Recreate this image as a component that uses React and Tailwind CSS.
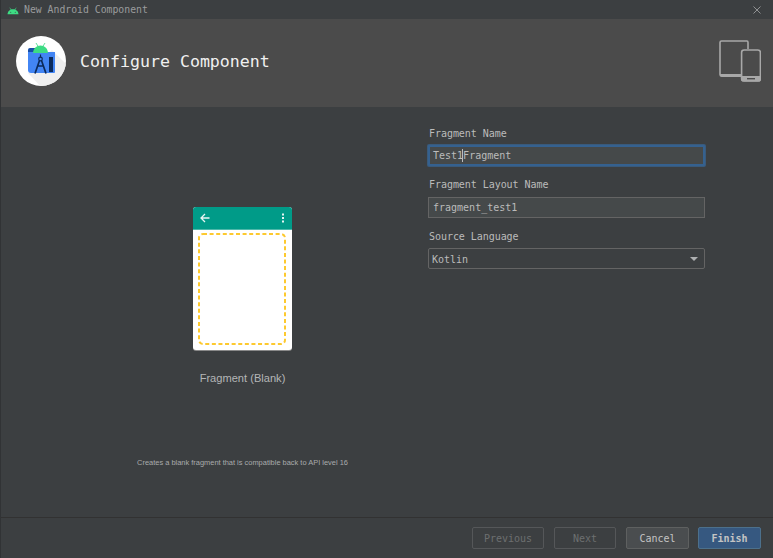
import React from "react";

const mono = "font-['DejaVu_Sans_Mono',monospace]";

function AndroidHead({ className }) {
  return (
    <svg viewBox="0 0 24 14" className={className}>
      <path d="M1 13.500C1.400 7.500 5.800 3.500 12 3.500s10.600 4 11 10z" fill="#3ddc84" />
      <path d="M6 1l2.500 4M18 1l-2.500 4" stroke="#3ddc84" strokeWidth="1.200" strokeLinecap="round" />
      <circle cx="7.500" cy="9.500" r="1" fill="#3c3f41" />
      <circle cx="16.500" cy="9.500" r="1" fill="#3c3f41" />
    </svg>
  );
}

function Logo() {
  return (
    <div className="w-[50px] h-[50px] rounded-full bg-white overflow-hidden shrink-0">
      <svg viewBox="0 0 50 50" className="w-[50px] h-[50px]">
        <path d="M36 14L52 30V52H26L12 37z" fill="#efefef" />
        <path d="M12 14q0-2 2-2h6v5h-8z" fill="#174ea6" />
        <path d="M12 16h24l3 0v20q0 1-1 1H15q-3 0-3-3z" fill="#4285f4" />
        <path d="M17 17C17.400 12.300 20.500 9.500 24.500 9.500s7.100 2.800 7.500 7.500z" fill="#3ddc84" />
        <path d="M20 7l2 3.200M29 7l-2 3.200" stroke="#3ddc84" strokeWidth="0.800" />
        <path d="M33 21h4v15h-4z" fill="#0b2a5b" />
        <circle cx="24.500" cy="23" r="1.800" fill="none" stroke="#0b2a5b" strokeWidth="1.200" />
        <path d="M23.500 24.500L19 37.500M25.500 24.500L30 37.500M21 30h7" stroke="#0b2a5b" strokeWidth="1.700" fill="none" />
        <path d="M24.500 18.500v3" stroke="#0b2a5b" strokeWidth="1.200" />
      </svg>
    </div>
  );
}

function Devices() {
  return (
    <svg viewBox="0 0 42 42" className="w-[42px] h-[42px]" fill="none">
      <path d="M22 36H2.500Q1 36 1 34.500V2.500Q1 1 2.500 1H28Q29 1 29 2.500V9" stroke="#a8a8a8" strokeWidth="1.600" />
      <path d="M1 34h21v3H3q-2 0-2-2z" fill="#a8a8a8" />
      <rect x="22.600" y="10" width="18.800" height="31" rx="2.500" stroke="#a8a8a8" strokeWidth="1.600" />
      <path d="M22 36h20v3q0 2.600-2.500 2.600h-15q-2.500 0-2.500-2.600z" fill="#a8a8a8" />
      <rect x="28" y="38" width="8" height="1.400" fill="#4b4b4b" />
    </svg>
  );
}

function Phone() {
  return (
    <div className="w-[99px] h-[143px] bg-white rounded-[3px] overflow-hidden flex flex-col shadow-[0_1px_0_#8a8a8a]">
      <div className="h-[23px] bg-[#009b88] border-b border-[#4db8aa] flex items-center justify-between pl-[7px] pr-[7px] shrink-0">
        <svg viewBox="0 0 10 10" className="w-[10px] h-[10px]" fill="none" stroke="#e6f5f3" strokeWidth="1.300">
          <path d="M9.500 5H1M5 1L1 5l4 4" />
        </svg>
        <svg viewBox="0 0 4 10" className="w-[4px] h-[10px]" fill="#e6f5f3">
          <rect x="1" y="0.500" width="2" height="2" />
          <rect x="1" y="4" width="2" height="2" />
          <rect x="1" y="7.500" width="2" height="2" />
        </svg>
      </div>
      <div className="flex-1 pt-[3px] pl-[5px] pr-[6px] pb-[5px]">
        <svg viewBox="0 0 88 112" className="w-[88px] h-[112px]" fill="none">
          <rect x="1" y="1" width="86" height="110" rx="4" stroke="#fdc92f" strokeWidth="2" strokeDasharray="4 2.600" />
        </svg>
      </div>
    </div>
  );
}

function Label({ children }) {
  return <div className={`${mono} text-[10px] leading-[14px] text-[#bbbbbb] pl-[1px] tracking-[-0.05px]`}>{children}</div>;
}

function Button({ children, className }) {
  return (
    <div className={`${mono} h-[22px] rounded-[2px] border text-[10px] flex items-center justify-center ${className}`}>
      {children}
    </div>
  );
}

export default function App() {
  return (
    <div className="w-[773px] h-[558px] bg-[#3c3f41] flex flex-col overflow-hidden border-l border-[#313335]">
      <div className={`${mono} h-[19px] shrink-0 flex items-center pt-[2px] pl-[6px] pr-[12px] bg-[#3c3f41] text-[#9a9c9d] text-[9.800px]`}>
        <AndroidHead className="w-[12px] h-[8px] mr-[5px]" />
        <span className="flex-1">New Android Component</span>
        <svg viewBox="0 0 8 8" className="w-[8px] h-[8px] -mt-[2px]" stroke="#9a9c9d" strokeWidth="0.900">
          <path d="M0.500 0.500l7 7M7.500 0.500l-7 7" />
        </svg>
      </div>
      <div className="h-[88px] shrink-0 bg-[#4b4b4b] flex items-center pb-[4px] pl-[15px] pr-[12px]">
        <Logo />
        <span className={`${mono} ml-[14px] mt-[2px] flex-1 text-[16.600px] text-[#f0f0f0]`}>Configure Component</span>
        <Devices />
      </div>
      <div className="flex-1 flex">
        <div className="w-[427px] shrink-0 flex flex-col items-center pl-[56px] pt-[100px]">
          <Phone />
          <div className="font-['Liberation_Sans',sans-serif] text-[11.100px] leading-[14px] text-[#b4b6b7] mt-[21px]">Fragment (Blank)</div>
          <div className="font-['Liberation_Sans',sans-serif] text-[7.450px] leading-[10px] text-[#a9abac] mt-[73px] whitespace-nowrap">
            Creates a blank fragment that is compatible back to API level 16
          </div>
        </div>
        <div className="w-[277px] shrink-0 flex flex-col pt-[20px]">
          <Label>Fragment Name</Label>
          <div className={`${mono} mt-[4px] h-[21px] border-2 border-[#35618f] shadow-[0_0_0_1px_#3a5a7a] bg-[#45494a] text-[#bbbbbb] text-[10px] flex items-center pl-[3px] rounded-[1px]`}>
            <span>Test1</span>
            <span className="w-px h-[13px] -ml-px bg-[#bbbbbb]" />
            <span>Fragment</span>
          </div>
          <div className="mt-[12px]"><Label>Fragment Layout Name</Label></div>
          <div className={`${mono} mt-[5px] h-[21px] border border-[#646464] bg-[#45494a] text-[#bbbbbb] text-[10px] flex items-center pl-[4px] pb-[1px]`}>
            fragment_test1
          </div>
          <div className="mt-[12px]"><Label>Source Language</Label></div>
          <div className={`${mono} mt-[4px] h-[21px] border border-[#646464] rounded-[2px] bg-[#3c3f41] text-[#bbbbbb] text-[10px] flex items-center justify-between pl-[3px] pr-[6px] pt-[1px]`}>
            <span>Kotlin</span>
            <span className="w-0 h-0 border-l-[4px] border-r-[4px] border-t-[4px] border-l-transparent border-r-transparent border-t-[#aeb0b1]" />
          </div>
        </div>
      </div>
      <div className="h-[41px] shrink-0 border-t border-[#323232] flex justify-end gap-[10px] pt-[9px] pr-[12px]">
        <Button className="w-[72px] border-[#555759] text-[#6d6f70]">Previous</Button>
        <Button className="w-[62px] border-[#555759] text-[#6d6f70]">Next</Button>
        <Button className="w-[63px] bg-[#4a4d4f] border-[#5e6060] text-[#c4c4c4]">Cancel</Button>
        <Button className="w-[63px] -ml-px bg-[#365880] border-[#4c708c] text-[#c4c4c4] font-bold">Finish</Button>
      </div>
    </div>
  );
}
